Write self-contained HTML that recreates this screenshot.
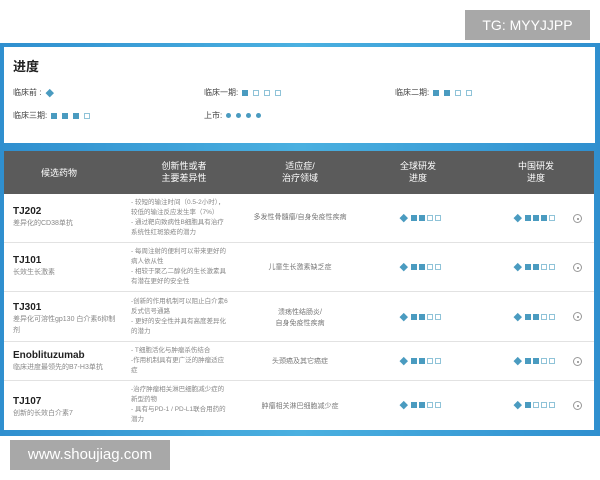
<!DOCTYPE html>
<html><head><meta charset="utf-8"><style>
*{margin:0;padding:0;box-sizing:border-box}
body{width:600px;height:480px;background:#fff;position:relative;overflow:hidden;font-family:"Liberation Sans","Noto Sans CJK SC",sans-serif}
.a{position:absolute}
.frame{left:0;top:43px;width:600px;height:393px;background:linear-gradient(90deg,#2f8fcf,#4ab0e0 50%,#2f8fcf)}
.card{left:4px;top:47px;width:591px;height:96px;background:#fff}
.hdr{left:4px;top:151px;width:590px;height:43px;background:#5b5b5b;color:#fff;font-size:9px;text-align:center;line-height:12px}
.hdr div{position:absolute;top:9px}
.row{left:4px;width:590px;background:#fff;border-bottom:1px solid #e2e2e2}
.t{font-size:8px;color:#444;line-height:10px}
.nm{font-size:10px;font-weight:bold;color:#222}
.sub{font-size:7px;color:#888;line-height:11px}
.d{font-size:6.5px;color:#888;line-height:10px}
.ind{font-size:7px;color:#777;text-align:center;line-height:11px;width:120px}
.p{display:flex;align-items:center;gap:2px;height:10px}
.q,.e,.dm,.o{display:inline-block;width:6px;height:6px;vertical-align:middle}
.q{background:#4a9bc0}
.e{border:1px solid #8fc3d8}
.dm{background:#4a9bc0;transform:rotate(45deg);width:5.5px;height:5.5px;margin:0 2px 0 1px}
.o{background:#4a9bc0;border-radius:50%;width:5px;height:5px}
.lg{display:inline-flex;gap:5px;vertical-align:middle;margin-left:2px}
.c{width:9px;height:9px;border:1px solid #999;border-radius:50%}
.c::after{content:"";position:absolute;left:2.5px;top:2.5px;width:2px;height:2px;background:#888;border-radius:50%}
.wm{background:#a8a8a8;color:#fff}
</style></head><body>
<div class="a wm" style="left:465px;top:10px;width:125px;height:30px;font-size:14px;line-height:30px;text-align:center">TG: MYYJJPP</div>
<div class="a frame"></div>
<div class="a card"></div>
<div class="a" style="left:13px;top:56px;font-size:13px;font-weight:bold;color:#222">进度</div>
<div class="a t" style="left:13px;top:88px">临床前 : <span class="lg"><span class="dm"></span></span></div>
<div class="a t" style="left:204px;top:88px">临床一期: <span class="lg"><span class="q"></span><span class="e"></span><span class="e"></span><span class="e"></span></span></div>
<div class="a t" style="left:395px;top:88px">临床二期: <span class="lg"><span class="q"></span><span class="q"></span><span class="e"></span><span class="e"></span></span></div>
<div class="a t" style="left:13px;top:111px">临床三期: <span class="lg"><span class="q"></span><span class="q"></span><span class="q"></span><span class="e"></span></span></div>
<div class="a t" style="left:204px;top:111px">上市: <span class="lg"><span class="o"></span><span class="o"></span><span class="o"></span><span class="o"></span></span></div>

<div class="a hdr">
<div style="left:0;width:110px;top:16px">候选药物</div>
<div style="left:120px;width:120px">创新性或者<br>主要差异性</div>
<div style="left:236px;width:120px">适应症/<br>治疗领域</div>
<div style="left:354px;width:120px">全球研发<br>进度</div>
<div style="left:472px;width:120px">中国研发<br>进度</div>
</div>

<div class="a row" style="top:194px;height:49px"></div>
<div class="a row" style="top:243px;height:49px"></div>
<div class="a row" style="top:292px;height:50px"></div>
<div class="a row" style="top:342px;height:39px"></div>
<div class="a row" style="top:381px;height:49px;border:none"></div>

<div class="a nm" style="left:13px;top:206px">TJ202</div>
<div class="a sub" style="left:13px;top:218px">差异化的CD38单抗</div>
<div class="a d" style="left:131px;top:198px">- 较短的输注时间（0.5-2小时），<br>较低的输注反应发生率（7%）<br>- 通过靶向致病性B细胞具有治疗<br>系统性红斑狼疮的潜力</div>
<div class="a ind" style="left:240px;top:212px">多发性骨髓瘤/自身免疫性疾病</div>

<div class="a nm" style="left:13px;top:255px">TJ101</div>
<div class="a sub" style="left:13px;top:267px">长效生长激素</div>
<div class="a d" style="left:131px;top:247px">- 每周注射的便利可以带来更好的<br>病人依从性<br>- 相较于聚乙二醇化的生长激素具<br>有潜在更好的安全性</div>
<div class="a ind" style="left:240px;top:262px">儿童生长激素缺乏症</div>

<div class="a nm" style="left:13px;top:302px">TJ301</div>
<div class="a sub" style="left:13px;top:314px">差异化可溶性gp130 白介素6抑制<br>剂</div>
<div class="a d" style="left:131px;top:297px">-创新的作用机制可以阻止白介素6<br>反式信号通路<br>- 更好的安全性并具有高度差异化<br>的潜力</div>
<div class="a ind" style="left:240px;top:307px">溃疡性结肠炎/<br>自身免疫性疾病</div>

<div class="a nm" style="left:13px;top:350px">Enoblituzumab</div>
<div class="a sub" style="left:13px;top:362px">临床进度最领先的B7-H3单抗</div>
<div class="a d" style="left:131px;top:346px">- T细胞活化与肿瘤杀伤结合<br>-作用机制具有更广泛的肿瘤适应<br>症</div>
<div class="a ind" style="left:240px;top:356px">头颈癌及其它癌症</div>

<div class="a nm" style="left:13px;top:396px">TJ107</div>
<div class="a sub" style="left:13px;top:408px">创新的长效白介素7</div>
<div class="a d" style="left:131px;top:385px">-治疗肿瘤相关淋巴细胞减少症的<br>新型药物<br>- 具有与PD-1 / PD-L1联合用药的<br>潜力</div>
<div class="a ind" style="left:240px;top:401px">肿瘤相关淋巴细胞减少症</div>

<div class="a p" style="left:400px;top:213px"><span class="dm"></span><span class="q"></span><span class="q"></span><span class="e"></span><span class="e"></span></div>
<div class="a p" style="left:514px;top:213px"><span class="dm"></span><span class="q"></span><span class="q"></span><span class="q"></span><span class="e"></span></div>
<div class="a p" style="left:400px;top:262px"><span class="dm"></span><span class="q"></span><span class="q"></span><span class="e"></span><span class="e"></span></div>
<div class="a p" style="left:514px;top:262px"><span class="dm"></span><span class="q"></span><span class="q"></span><span class="e"></span><span class="e"></span></div>
<div class="a p" style="left:400px;top:312px"><span class="dm"></span><span class="q"></span><span class="q"></span><span class="e"></span><span class="e"></span></div>
<div class="a p" style="left:514px;top:312px"><span class="dm"></span><span class="q"></span><span class="q"></span><span class="e"></span><span class="e"></span></div>
<div class="a p" style="left:400px;top:356px"><span class="dm"></span><span class="q"></span><span class="q"></span><span class="e"></span><span class="e"></span></div>
<div class="a p" style="left:514px;top:356px"><span class="dm"></span><span class="q"></span><span class="q"></span><span class="e"></span><span class="e"></span></div>
<div class="a p" style="left:400px;top:400px"><span class="dm"></span><span class="q"></span><span class="q"></span><span class="e"></span><span class="e"></span></div>
<div class="a p" style="left:514px;top:400px"><span class="dm"></span><span class="q"></span><span class="e"></span><span class="e"></span><span class="e"></span></div>
<div class="a c" style="left:573px;top:214px"></div>
<div class="a c" style="left:573px;top:263px"></div>
<div class="a c" style="left:573px;top:312px"></div>
<div class="a c" style="left:573px;top:357px"></div>
<div class="a c" style="left:573px;top:401px"></div>

<div class="a wm" style="left:10px;top:440px;width:160px;height:30px;font-size:15px;line-height:30px;text-align:center">www.shoujiag.com</div>
</body></html>
